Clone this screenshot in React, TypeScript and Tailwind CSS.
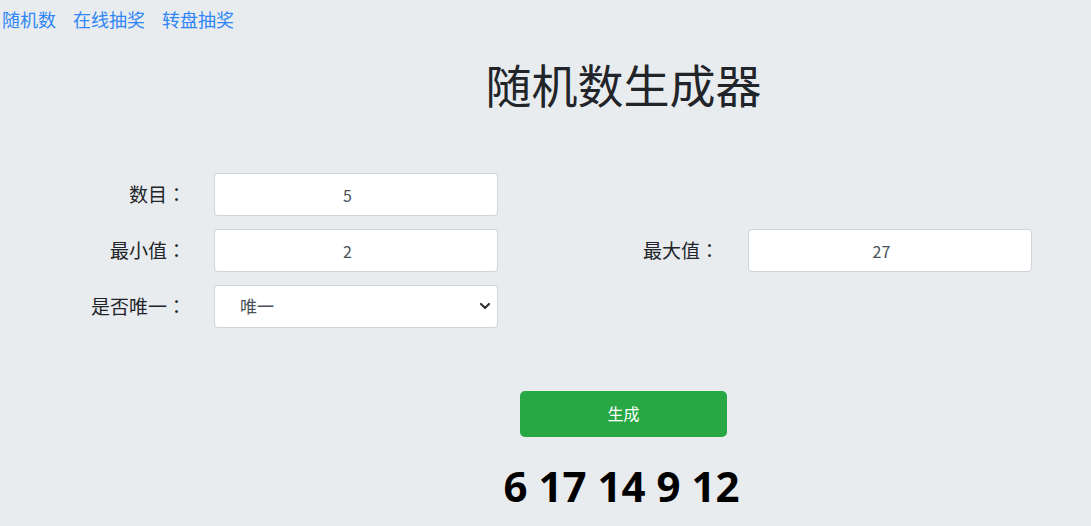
import { useState } from "react";

const cjk = "font-['Segoe_UI','Noto_Sans','Noto_Sans_CJK_SC',sans-serif]";
const cjkLabel = "font-['Noto_Sans_CJK_SC',sans-serif]";

const navLinks = ["随机数", "在线抽奖", "转盘抽奖"];

function NumberField({ value }: { value: string }) {
	const [v, setV] = useState(value);
	return (
		<input
			className="h-[43px] w-[284px] rounded-[4px] border border-[#ced4da] bg-white pr-[29px] pl-3 text-center text-base text-[#495057] outline-none"
			onChange={(e) => setV(e.target.value)}
			type="text"
			value={v}
		/>
	);
}

function Label({ text, width }: { text: string; width: string }) {
	return (
		<label className={`${width} text-right [text-spacing-trim:space-all]`}>
			{text}
			<span className="font-['Noto_Sans_CJK_TC',sans-serif]">：</span>
		</label>
	);
}

export default function App() {
	const [unique, setUnique] = useState("1");
	return (
		<div className={`min-h-[526px] w-full bg-[#e9ecef] text-[#212529] ${cjk}`}>
			<nav
				className={`flex h-9 items-center gap-[17px] pt-[1px] pl-[2px] text-[18px] leading-9 ${cjkLabel}`}
			>
				{navLinks.map((l) => (
					<a className="text-[#2f86f6]" href="#" key={l}>
						{l}
					</a>
				))}
			</nav>

			<h1 className="mt-[21px] pl-[156px] text-center text-[46px] leading-[56px] font-normal">
				随机数生成器
			</h1>

			<div
				className={`mt-[60px] flex flex-col gap-[13px] text-[19px] ${cjkLabel}`}
			>
				<div className="flex items-center">
					<Label text="数目" width="w-[186px]" />
					<div className="ml-[28px]">
						<NumberField value="5" />
					</div>
				</div>
				<div className="flex items-center">
					<Label text="最小值" width="w-[186px]" />
					<div className="ml-[28px]">
						<NumberField value="2" />
					</div>
					<Label text="最大值" width="w-[221px]" />
					<div className="ml-[29px]">
						<NumberField value="27" />
					</div>
				</div>
				<div className="flex items-center">
					<Label text="是否唯一" width="w-[186px]" />
					<div className="relative ml-[28px]">
						<select
							className={`h-[43px] w-[284px] appearance-none rounded-[4px] border border-[#ced4da] bg-white pl-[25px] text-[17px] text-[#495057] outline-none ${cjk}`}
							onChange={(e) => setUnique(e.target.value)}
							value={unique}
						>
							<option value="1">唯一</option>
							<option value="0">不唯一</option>
						</select>
						<svg
							className="pointer-events-none absolute top-[17px] right-[7px]"
							fill="none"
							height="8"
							viewBox="0 0 12 8"
							width="12"
						>
							<path
								d="M2 2l4 4 4-4"
								stroke="#333"
								strokeLinecap="round"
								strokeLinejoin="round"
								strokeWidth="2.2"
							/>
						</svg>
					</div>
				</div>
			</div>

			<div className="mt-[63px] flex flex-col items-center pl-[152px]">
				<button
					className="ml-[4px] h-[46px] w-[207px] rounded-[5px] bg-[#28a745] text-base text-white"
					type="button"
				>
					生成
				</button>
				<div className="mt-[25px] font-['Noto_Sans',sans-serif] text-[42px] leading-[48px] font-bold text-black">
					6 17 14 9 12
				</div>
			</div>
		</div>
	);
}
